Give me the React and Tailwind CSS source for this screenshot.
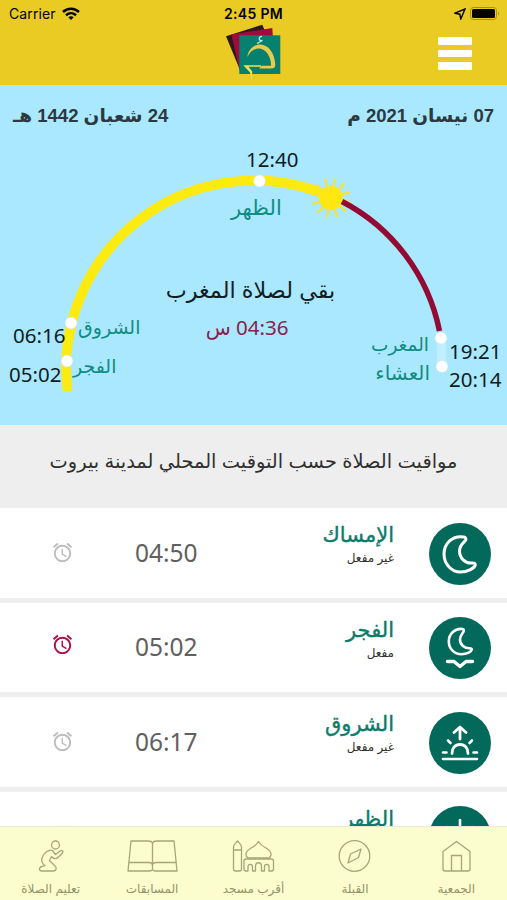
import clsx from 'clsx'

const DIAL_MARKS = [
  { cx: 67, cy: 361 },
  { cx: 71, cy: 323 },
  { cx: 259.5, cy: 181 },
  { cx: 441, cy: 338 },
  { cx: 442, cy: 366.5 },
]

const SUN_RAYS = [12, 42, 72, 102, 132, 162, 192, 222, 252, 282, 312, 342]

function MoonIcon() {
  return (
    <path
      d="M35 14C24 12 15 20 15 31C15 41.500 23 49 31.500 49C39 49 45.500 45 46.300 42C46.500 40.200 45 39.800 43 40C36 40.500 30.500 35 30.500 28C30.500 22.500 34 20 36.400 17.500C37.700 16 36.500 14.300 35 14Z"
      strokeWidth="3"
    />
  )
}

function DawnIcon() {
  return (
    <>
      <path
        d="M33.500 12C26 11 19.800 17 19.800 24.500C19.800 32 25.500 37.200 32.500 37.200C38 37.200 42.500 34.500 42.800 32.600C42.800 31.500 41.800 31.300 40.500 31.300C35 31.300 31 27.500 31 22.500C31 18.500 33.500 16.500 34.500 14.600C35.200 13.300 34.800 12.200 33.500 12Z"
        strokeWidth="2.600"
      />
      <path d="M18.500 44.500H25L31 49.500L37 44.500H43.500" strokeWidth="3.400" />
    </>
  )
}

function SunriseIcon() {
  return (
    <>
      <path d="M31 27V16M25 20.500L31 15L37 20.500" strokeWidth="2.800" />
      <path d="M23 41.500C23 36 26 32.500 31 32.500C36 32.500 39 36 39 41.500" strokeWidth="2.800" />
      <path d="M19 28.500L21.500 31M43 28.500L40.500 31M14 40.500H17.500M44.500 40.500H48M14 47H48" strokeWidth="2.600" />
    </>
  )
}

function NoonIcon() {
  return (
    <>
      <circle cx="31" cy="31" r="8" strokeWidth="2.800" />
      <path d="M31 14V20M18 21L22 24M44 21L40 24M13 31H18M44 31H49M18 44L22 40M44 44L40 40M31 43V49" strokeWidth="2.600" />
    </>
  )
}

const PRAYERS = [
  { name: 'الإمساك', time: '04:50', icon: MoonIcon, active: false },
  { name: 'الفجر', time: '05:02', icon: DawnIcon, active: true },
  { name: 'الشروق', time: '06:17', icon: SunriseIcon, active: false },
  { name: 'الظهر', time: '12:40', icon: NoonIcon, active: false },
]

const TABS = [
  {
    label: 'تعليم الصلاة',
    art: (
      <>
        <circle cx="30.500" cy="9" r="4" />
        <path d="M27.500 14.500C24 13 18.500 17 17 22C16.200 25 17 27.500 20 29.500C17 30 14.500 30.500 14.500 33C14.500 34.500 15.500 35 17 35H28C31.500 35 32 32 30 30L24.500 24.500L26.500 20.500C28.500 23 31.500 23.500 33.500 21L37.500 17C39 15 36.500 13.500 35 15L30.500 18.500Z" />
      </>
    ),
  },
  {
    label: 'المسابقات',
    art: (
      <>
        <path d="M25.500 7C24.800 5.500 23.500 5 21.500 5H4L1 35H22.500C24 35 25 34.500 25.500 33.500C26 34.500 27 35 28.500 35H50L47 5H29.500C27.500 5 26.200 5.500 25.500 7V33.500" />
        <path d="M1.800 26.500H22C24 26.500 25 27.300 25.500 28.500C26 27.300 27 26.500 29 26.500H49.200" />
      </>
    ),
  },
  {
    label: 'أقرب مسجد',
    art: (
      <>
        <path d="M5.500 14V11C5.500 8.500 7.500 7.500 9.500 5C11.500 7.500 13.500 8.500 13.500 11V14M5.500 14H13.500V33Q13.500 35 11.500 35H7.500Q5.500 35 5.500 33V14" />
        <path d="M20 22C16 19 18.500 14.500 23 12C27 10 29 8 30.500 5.500C32 8 34 10 38 12C42.500 14.500 45 19 41 22Z" />
        <path d="M18 23H43.500Q45.500 23 45.500 25V33Q45.500 35 43.500 35H41V31C41 27.500 36.500 27.500 36.500 31V35H33.500V30.500C33.500 25.500 27.500 25.500 27.500 30.500V35H24.500V31C24.500 27.500 20 27.500 20 31V35H18Q16 35 16 33V25Q16 23 18 23Z" />
      </>
    ),
  },
  {
    label: 'القبلة',
    art: (
      <>
        <circle cx="25.500" cy="20" r="15.300" />
        <path d="M32 13L29.500 21.500L19 27L21.500 18Z" />
      </>
    ),
  },
  {
    label: 'الجمعية',
    art: (
      <>
        <path d="M25.500 5.500L39 15.500V33Q39 35 37 35H14Q12 35 12 33V15.500Z" />
        <path d="M20.500 35V19.500H30.500V35" />
      </>
    ),
  },
]

function AlarmIcon({ active }) {
  return (
    <svg viewBox="0 0 24 24" className={clsx('size-[23px]', active ? 'fill-[#a91048]' : 'fill-[#bdbdbd]')}>
      <path d="M22 5.720l-4.600-3.860-1.290 1.530 4.600 3.860L22 5.720zM7.880 3.390L6.600 1.860 2 5.710l1.290 1.530 4.590-3.850zM12.500 8H11v6l4.750 2.850.75-1.230-4-2.370V8zM12 4c-4.970 0-9 4.030-9 9s4.020 9 9 9c4.970 0 9-4.030 9-9s-4.030-9-9-9zm0 16c-3.870 0-7-3.130-7-7s3.130-7 7-7 7 3.130 7 7-3.130 7-7 7z" />
    </svg>
  )
}

function Logo() {
  return (
    <svg viewBox="0 0 58 60" className="h-[60px] w-[58px]">
      <path d="M0 12.300L36.300 .7L42 14L14 46Z" fill="#2b1a18" />
      <path d="M5.300 10.500L46.300 4L48 30L13.500 46Z" fill="#a00a3c" />
      <rect x="13.300" y="11.300" width="41" height="38.700" fill="#07816f" />
      <path d="M21.300 33C22 26 28 20.500 34 20.500C43 20.500 49 30 49.300 41C49.300 43.500 48 44.500 45 44.500H33L36 41.800H45C45.500 33 40 25.500 34 24.500C28 24 24 28 21.300 33Z" fill="#e8cb4b" />
      <path d="M17.300 41.200H35V42.800H22.500L26.300 47.500L25.500 57.500L24 48.500Z" fill="#eee250" />
      <path d="M36 12.500C32.500 12 32 17.500 36.500 16.500M35.500 17L31 19.500" fill="none" stroke="#c9eee6" strokeWidth="1.300" />
    </svg>
  )
}

function Header() {
  return (
    <header className="flex h-[85px] shrink-0 flex-col bg-[#eacb24]">
      <div className="grid h-[24px] shrink-0 grid-cols-3 items-end px-[9px] font-['Inter'] text-black">
        <div className="flex items-center gap-[6px] pb-[1px] text-[14px] leading-[18px] tracking-[0.1px]">
          Carrier
          <svg viewBox="0 0 18 14" className="h-[14px] w-[18px]" fill="none" stroke="black" strokeWidth="2.500">
            <path d="M1 5C5.500 .7 12.500 .7 17 5M4 8.200C7 5.500 11 5.500 14 8.200" />
            <path d="M9 13L6.300 10.300C8 9 10 9 11.700 10.300Z" fill="black" stroke="none" />
          </svg>
        </div>
        <div className="pb-[1px] text-center text-[14px] leading-[18px] font-semibold tracking-[0.3px]">2:45 PM</div>
        <div className="flex items-center justify-end gap-[4px] pb-[4px]">
          <svg viewBox="0 0 12 12" className="size-[12px]" fill="none" stroke="black" strokeWidth="1.400">
            <path d="M11 1L6.800 11L5.800 6.200L1 5.200Z" />
          </svg>
          <svg viewBox="0 0 30 13" className="-mr-[2px] h-[13px] w-[30px]">
            <rect x=".5" y=".5" width="26" height="12" rx="3" fill="none" stroke="#a38d1c" />
            <rect x="2" y="2" width="23" height="9" rx="1.500" fill="black" />
            <path d="M28 4.500Q30 6.500 28 8.500Z" fill="#a38d1c" />
          </svg>
        </div>
      </div>
      <div className="grid grow grid-cols-3 pr-[35px]">
        <span />
        <div className="flex justify-center pl-[39px]">
          <Logo />
        </div>
        <div className="flex flex-col items-end gap-[5px] pt-[13px]">
          <span className="h-[7.500px] w-[34px] rounded-[1px] bg-white" />
          <span className="h-[7.500px] w-[34px] rounded-[1px] bg-white" />
          <span className="h-[7.500px] w-[34px] rounded-[1px] bg-white" />
        </div>
      </div>
    </header>
  )
}

function Dial() {
  const time = "absolute font-['Noto_Sans'] text-[20.500px] leading-[24px] text-[#101c22]"
  const name = 'absolute whitespace-nowrap leading-[24px] text-[#128c80]'

  return (
    <section className="relative h-[340px] shrink-0 bg-[#a9e8ff]">
      <div className="flex justify-between px-[13px] pt-[18px] text-[18.500px] leading-[26px] font-bold text-[#2c3940]" dir="rtl">
        <span>07 نيسان 2021 م</span>
        <span>24 شعبان 1442 هـ</span>
      </div>

      <svg viewBox="0 85 507 340" className="absolute inset-0 h-[340px] w-[507px]" fill="none">
        <path d="M67.500 391A188 188 0 0 1 331 197" stroke="#fdea10" strokeWidth="10" />
        <path d="M441 338L442 366" stroke="#c1effe" strokeWidth="9" />
        {SUN_RAYS.map((deg) => (
          <path key={deg} d="M331 187V178" stroke="#f5e33b" strokeWidth="2.300" transform={`rotate(${deg} 331 198)`} />
        ))}
        <circle cx="331" cy="198" r="12" fill="#ffe712" />
        <path d="M342 201.500A188 188 0 0 1 439.500 331" stroke="#930a33" strokeWidth="5.500" />
        {DIAL_MARKS.map(({ cx, cy }) => (
          <circle key={cy} cx={cx} cy={cy} r="6" fill="white" stroke="#cfdfe2" strokeWidth=".5" />
        ))}
      </svg>

      <span className={`${time} top-[62px] left-[246px]`}>12:40</span>
      <span className={`${name} top-[111px] left-[231px] text-[21px]`}>الظهر</span>
      <span className={`${time} top-[238px] left-[13px]`}>06:16</span>
      <span className={`${name} top-[231px] left-[78px] text-[19px]`}>الشروق</span>
      <span className={`${time} top-[277px] left-[9px]`}>05:02</span>
      <span className={`${name} top-[270px] left-[73px] text-[19px]`}>الفجر</span>
      <span className={`${time} top-[254px] left-[449px]`}>19:21</span>
      <span className={`${name} top-[248px] right-[78px] text-[18.500px]`}>المغرب</span>
      <span className={`${time} top-[282px] left-[449px]`}>20:14</span>
      <span className={`${name} top-[276px] right-[77px] text-[20px]`}>العشاء</span>

      <div className="flex flex-col items-center pt-[146px] pr-[6px] text-[22.300px]" dir="rtl">
        <span className="leading-[32px] text-[#101c22]">بقي لصلاة المغرب</span>
        <span className="pr-[7px] font-['Noto_Sans','DejaVu_Sans',sans-serif] text-[20.500px] leading-[40px] text-[#8b1e4d]">04:36 س</span>
      </div>
    </section>
  )
}

function PrayerRow({ name, time, icon: Icon, active }) {
  return (
    <div className="flex h-[89.500px] shrink-0 items-center bg-white pr-[16px] pl-[51px]">
      <div className={clsx(active ? 'pb-[6px]' : 'pb-[1px]')}>
        <AlarmIcon active={active} />
      </div>
      <span className="ml-[61px] font-['Noto_Sans'] text-[24.500px] leading-[30px] text-[#606060]">{time}</span>
      <div className="flex grow flex-col self-start pt-[12px] text-right">
        <span className="text-[21px] leading-[30px] text-[#0b7c69] [-webkit-text-stroke:0.4px]">{name}</span>
        <span className="text-[12px] leading-[16px] text-[#303030]">{active ? 'مفعل' : 'غير مفعل'}</span>
      </div>
      <div className="mt-[2px] ml-[35px] size-[62px] rounded-full bg-[#03695a]">
        <svg viewBox="0 0 62 62" className="size-[62px]" fill="none" stroke="white" strokeLinecap="round" strokeLinejoin="round">
          <Icon />
        </svg>
      </div>
    </div>
  )
}

function TabBar() {
  return (
    <nav className="absolute inset-x-0 bottom-0 flex h-[74px] border-t border-[#e6e9d4] bg-[#fbfdcf]">
      {TABS.map(({ label, art }) => (
        <div key={label} className="flex flex-1 flex-col items-center pt-[9px]">
          <svg viewBox="0 0 51 40" className="h-[40px] w-[51px]" fill="none" stroke="#a5a67c" strokeWidth="1.300" strokeLinejoin="round">
            {art}
          </svg>
          <span className="mt-[4px] text-[12px] leading-[18px] whitespace-nowrap text-[#929468]">{label}</span>
        </div>
      ))}
    </nav>
  )
}

export default function App() {
  return (
    <div className="relative flex h-[900px] w-[507px] flex-col overflow-hidden bg-[#eeeeee] font-['Liberation_Sans','DejaVu_Sans',sans-serif]">
      <Header />
      <Dial />
      <h1 className="flex h-[83px] shrink-0 items-center justify-center pb-[10px] text-[19.400px] text-[#303030]" dir="rtl">
        مواقيت الصلاة حسب التوقيت المحلي لمدينة بيروت
      </h1>
      <main className="flex flex-col gap-[5px]">
        {PRAYERS.map((prayer) => (
          <PrayerRow key={prayer.name} {...prayer} />
        ))}
      </main>
      <TabBar />
    </div>
  )
}
